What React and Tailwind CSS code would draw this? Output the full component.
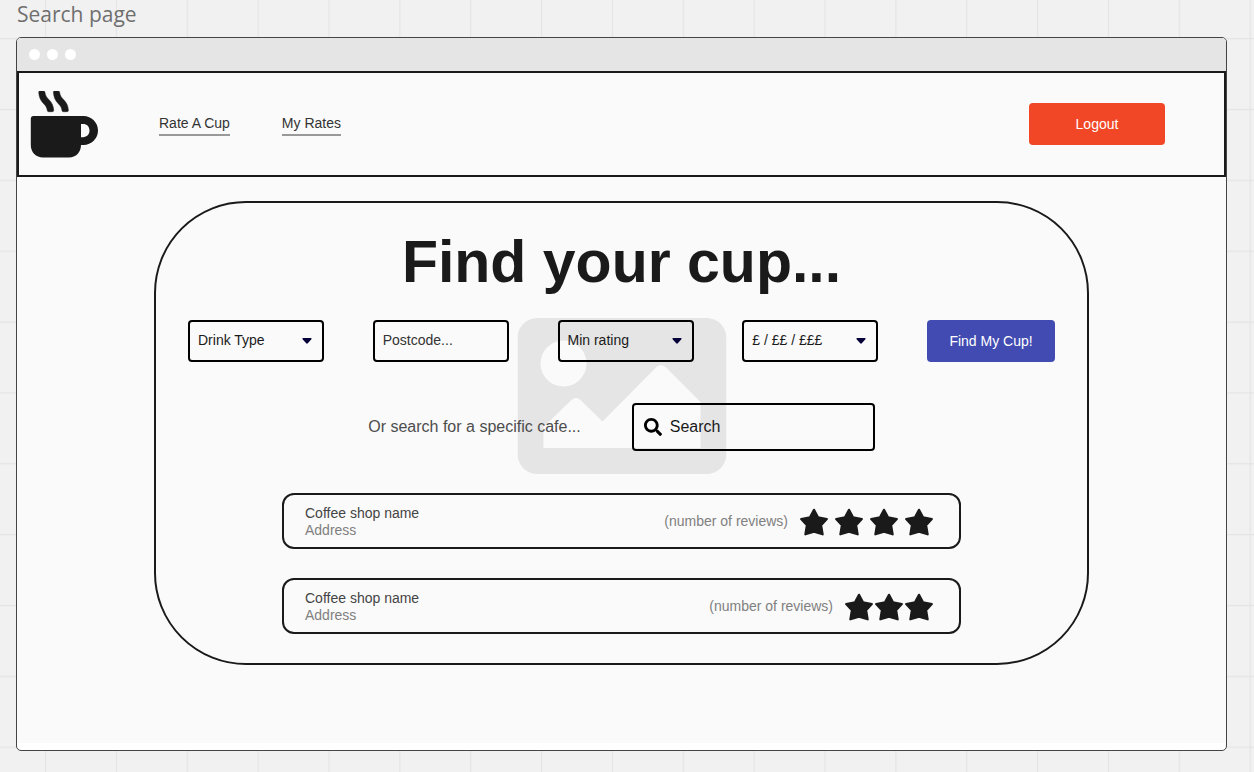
import React from "react";
import { FaSearch } from "react-icons/fa";

function CanvasGrid() {
  return (
    <svg aria-hidden="true" className="pointer-events-none absolute inset-0 -z-10 h-full w-full">
      <defs>
        <pattern id="grid" x="45" y="38" width="70.86" height="70.86" patternUnits="userSpaceOnUse">
          <path d="M0.5 0V71M0 0.5H71" stroke="#e4e4e4" strokeWidth="1.4" fill="none" />
        </pattern>
      </defs>
      <rect width="100%" height="100%" fill="url(#grid)" />
    </svg>
  );
}

const STEAM =
  "M8.7 1.2Q8.7 0 9.9 0H13.5Q14.7 0 14.9 1.2C15.3 4.6 16.7 6.4 19.2 8.900C22 11.700 23.300 14.800 23.700 19Q23.800 20.700 22.400 20.700H18.700Q17.500 20.700 17.300 19.400C16.900 16.400 15.600 14.600 13.200 12.200C10.200 9.200 9 5.500 8.700 1.200Z";

function CupLogo() {
  return (
    <svg viewBox="0 0 68 67" role="img" aria-label="Coffee cup" className="h-[67px] w-[68px] shrink-0">
      <g fill="#1a1a1a">
        <g stroke="#1a1a1a" strokeWidth="0.5">
          <path d={STEAM} />
          <path d={STEAM} transform="translate(14.7 0)" />
        </g>
        <path
          fillRule="evenodd"
          d="M3.5 25H53.5C61.5 25 68 31.5 68 39.5S61.5 54 53.5 54H51C51 61 46 66.5 39 66.5H13C6 66.5 0.8 61.5 0.8 54V28C0.8 26 1.7 25 3.5 25ZM51 33V46.2H53C57 46.2 59.5 43.5 59.5 39.6S57 33 53 33Z"
        />
      </g>
    </svg>
  );
}

function Star() {
  return (
    <svg viewBox="0 0 28 28" aria-hidden="true" className="h-7 w-7">
      <path
        d="M14 1.8L18 9.3L26.8 11.1L21.1 17.3L22.6 26.3L14 23.6L5.4 26.3L6.9 17.3L1.2 11.1L10 9.3Z"
        fill="#1a1a1a"
        stroke="#1a1a1a"
        strokeWidth="2.2"
        strokeLinejoin="round"
      />
    </svg>
  );
}

function PicturePlaceholder() {
  return (
    <svg
      viewBox="0 0 209 156"
      aria-hidden="true"
      className="absolute left-1/2 top-[115px] -z-10 h-[156px] w-[209px] -translate-x-1/2"
    >
      <rect width="209" height="156" rx="20" fill="#e5e5e5" />
      <circle cx="46" cy="45.5" r="23" fill="#fafafa" />
      <path
        d="M26 130V109L54 82Q58.5 78 63 82L85 103.5L139 49Q143.5 45.5 148 49L183 84V130Z"
        fill="#fafafa"
      />
    </svg>
  );
}

function FilterSelect({ label, options }) {
  return (
    <div className="relative w-34">
      <select
        aria-label={label}
        className="h-[42px] w-full appearance-none rounded-sm border-2 border-black bg-transparent pr-8 pb-0.5 pl-2 text-sm text-[#1a1a1a]"
      >
        <option>{label}</option>
        {options.map((option) => (
          <option key={option}>{option}</option>
        ))}
      </select>
      <svg viewBox="0 0 10 6" aria-hidden="true" className="pointer-events-none absolute top-[18px] right-3 h-1.5 w-2.5">
        <path d="M1.2 0H8.8Q10.2 0.4 9.2 1.5L5.8 5.3Q5 6 4.2 5.3L0.8 1.5Q-0.2 0.4 1.2 0Z" fill="#050038" />
      </svg>
    </div>
  );
}

function CafeResult({ name, address, stars, gap }) {
  return (
    <li className="flex h-14 items-center justify-between rounded-xl border-2 border-[#1a1a1a] pr-[26px] pl-[21px] text-sm">
      <div className="pt-0.5 leading-[17px]">
        <h2 className="text-[#444]">{name}</h2>
        <p className="text-[#808080]">{address}</p>
      </div>
      <div className="flex items-center gap-3">
        <span className="text-[#808080]">(number of reviews)</span>
        <span role="img" aria-label={`${stars} stars`} className={`flex pt-px ${gap}`}>
          {Array.from({ length: stars }, (_, i) => (
            <Star key={i} />
          ))}
        </span>
      </div>
    </li>
  );
}

export default function App() {
  return (
    <div className="relative isolate min-h-screen bg-[#f1f1f1] pr-[27px] pb-5 pl-4 font-['Liberation_Sans',Arial,sans-serif]">
      <CanvasGrid />
      <p className="h-[37px] pl-px font-['Open_Sans',sans-serif] text-[21px] leading-7 text-[#6f6f6f]">Search page</p>

      <div className="overflow-hidden rounded-[5px] border border-[#444] bg-white pb-[7px]">
        <div className="flex h-[33px] items-center gap-[7px] bg-[#e5e5e5] px-3">
          <span className="h-[11px] w-[11px] rounded-full bg-white" />
          <span className="h-[11px] w-[11px] rounded-full bg-white" />
          <span className="h-[11px] w-[11px] rounded-full bg-white" />
        </div>

        <header className="flex h-[106px] items-center border-2 border-[#1a1a1a] bg-[#fafafa] pr-[59px] pl-[11px]">
          <CupLogo />
          <nav className="ml-[61px] flex gap-[52px] pt-px text-sm text-[#333]">
            <a href="#rate" className="border-b-2 border-[#999] pb-px">Rate A Cup</a>
            <a href="#rates" className="border-b-2 border-[#999] pb-px">My Rates</a>
          </nav>
          <button type="button" className="ml-auto h-[42px] w-34 rounded-sm bg-[#f24726] text-sm text-white">
            Logout
          </button>
        </header>

        <main className="bg-[#fafafa] px-6 pt-6 pb-[78px]">
          <section className="relative isolate mx-auto max-w-[935px] rounded-[92px] border-2 border-[#1a1a1a] px-8 pt-6 pb-[29px]">
            <PicturePlaceholder />
            <h1 className="text-center text-[59px] leading-[70px] font-bold text-[#1a1a1a]">Find your cup...</h1>

            <form className="mt-[23px] flex items-center justify-between" onSubmit={(e) => e.preventDefault()}>
              <FilterSelect label="Drink Type" options={["Coffee", "Tea"]} />
              <input
                type="text"
                aria-label="Postcode"
                placeholder="Postcode..."
                className="h-[42px] w-34 rounded-sm border-2 border-black bg-transparent px-2 pb-0.5 text-sm placeholder:text-[#333]"
              />
              <FilterSelect label="Min rating" options={["1", "2", "3", "4"]} />
              <FilterSelect label="£ / ££ / £££" options={["£", "££", "£££"]} />
              <button type="submit" className="h-[42px] w-32 rounded-sm bg-[#414bb2] text-sm text-white">
                Find My Cup!
              </button>
            </form>

            <div className="mt-[41px] flex items-center justify-center gap-[51px]">
              <label htmlFor="cafe" className="text-base text-[#4d4d4d]">Or search for a specific cafe...</label>
              <div className="flex h-12 w-[243px] items-center gap-2 rounded-sm border-2 border-black px-2.5">
                <FaSearch aria-hidden="true" className="h-[18px] w-[18px] shrink-0 text-black" />
                <input
                  id="cafe"
                  type="search"
                  placeholder="Search"
                  className="w-full min-w-0 bg-transparent text-base outline-none placeholder:text-[#1a1a1a]"
                />
              </div>
            </div>

            <ul className="mx-auto mt-[42px] flex max-w-[679px] flex-col gap-[29px]">
              <CafeResult name="Coffee shop name" address="Address" stars={4} gap="gap-[7px]" />
              <CafeResult name="Coffee shop name" address="Address" stars={3} gap="gap-0.5" />
            </ul>
          </section>
        </main>
      </div>
    </div>
  );
}
